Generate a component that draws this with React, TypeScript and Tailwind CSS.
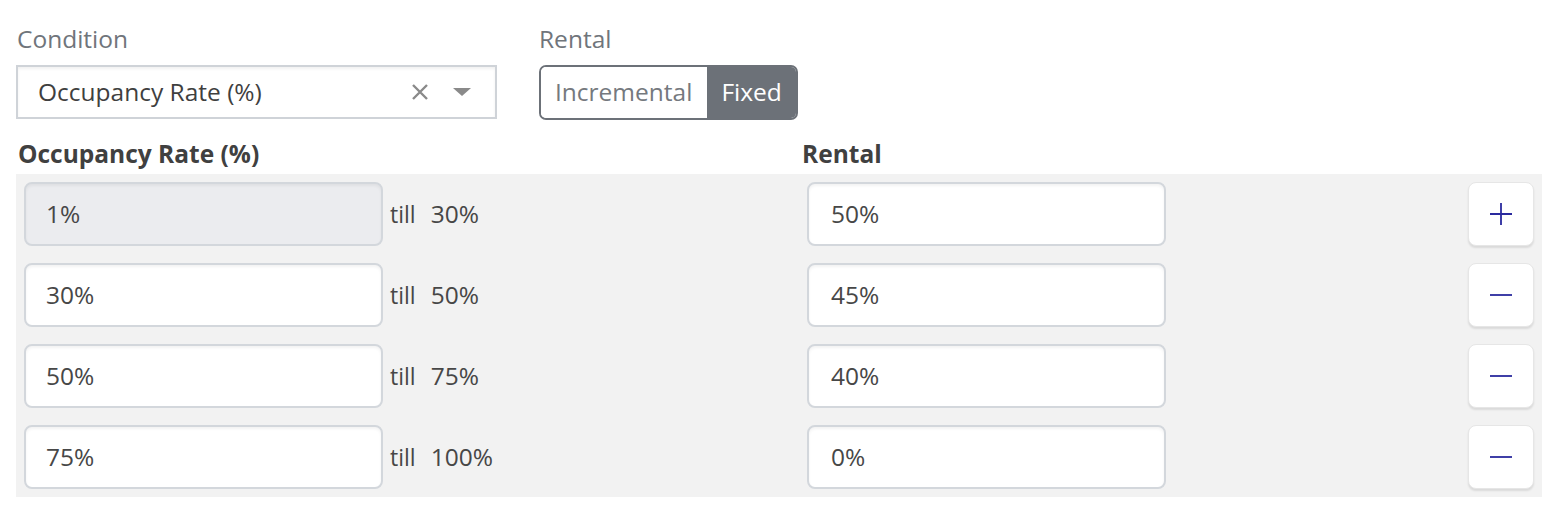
import React from 'react';

const rows = [
  { from: '1%', till: '30%', rental: '50%', disabled: true },
  { from: '30%', till: '50%', rental: '45%' },
  { from: '50%', till: '75%', rental: '40%' },
  { from: '75%', till: '100%', rental: '0%' },
];

function PlusIcon() {
  return (
    <svg width="24" height="24" viewBox="0 0 24 24">
      <path d="M12 1v22M1 12h22" stroke="#2a2a9e" strokeWidth="1.8" />
    </svg>
  );
}

function MinusIcon() {
  return (
    <svg width="24" height="24" viewBox="0 0 24 24">
      <path d="M1 12h22" stroke="#2a2a9e" strokeWidth="1.8" />
    </svg>
  );
}

export default function App() {
  return (
    <div
      className="w-[1552px] h-[520px] bg-white pl-4 pr-[10px] pt-[24px] text-[#4a4a4a]"
      style={{ fontFamily: '"Open Sans", "Noto Sans", sans-serif' }}
    >
      <div className="flex gap-[42px]">
        <div className="flex flex-col w-[481px]">
          <label className="text-[24.5px] leading-[30px] text-[#70757b] px-[1px]">Condition</label>
          <div className="mt-[11px] h-[54px] border-2 border-[#cfd3d8] shadow-[inset_0_2px_3px_rgba(0,0,0,0.06)] flex items-center pl-5 pr-6">
            <span className="flex-1 text-[24.5px] text-[#3f3f3f]">Occupancy Rate (%)</span>
            <svg width="18" height="18" viewBox="0 0 18 18" className="mr-[24px]">
              <path d="M2 2l14 14M16 2L2 16" stroke="#8a8a8a" strokeWidth="2.4" />
            </svg>
            <svg width="18" height="10" viewBox="0 0 18 10">
              <path d="M0 1h18L9 9z" fill="#8a8a8a" />
            </svg>
          </div>
        </div>
        <div className="flex flex-col">
          <label className="text-[24.5px] leading-[30px] text-[#70757b]">Rental</label>
          <div className="mt-[11px] h-[55px] flex border-2 border-[#6c7178] rounded-[7px] overflow-hidden">
            <button className="pl-[14px] pr-[15px] text-[24.5px] text-[#75797e] bg-white">Incremental</button>
            <button className="px-[14px] text-[24.5px] text-white bg-[#6c7178]">Fixed</button>
          </div>
        </div>
      </div>

      <div className="flex mt-[18px] h-[33px] items-center font-bold text-[24.5px] text-[#404040]">
        <div className="w-[786px] pl-[2px]">Occupancy Rate (%)</div>
        <div>Rental</div>
      </div>

      <div className="mt-[3px] w-[1526px] bg-[#f2f2f2] p-2 flex flex-col gap-[17px]">
        {rows.map((r, i) => (
          <div key={i} className="flex items-center h-[64px]">
            <div className="w-[783px] flex items-center">
              <div
                className={
                  'w-[359px] h-[64px] rounded-[8px] border-2 border-[#d3d7dc] flex items-center pl-5 text-[24.5px] text-[#474747] shadow-[inset_0_2px_3px_rgba(0,0,0,0.05)] ' +
                  (r.disabled ? 'bg-[#ebecef]' : 'bg-white')
                }
              >
                {r.from}
              </div>
              <div className="ml-[7px] flex items-baseline text-[#474747]">
                <span className="text-[23px]">till</span>
                <span className="ml-[15px] text-[24.5px]">{r.till}</span>
              </div>
            </div>
            <div className="w-[359px] h-[64px] rounded-[8px] border-2 border-[#d3d7dc] bg-white flex items-center pl-[22px] text-[24.5px] text-[#474747] shadow-[inset_0_2px_3px_rgba(0,0,0,0.05)]">
              {r.rental}
            </div>
            <div className="flex-1" />
            <button className="w-[66px] h-[64px] rounded-[8px] bg-white border border-[#e6e6e6] shadow-[0_2px_2px_rgba(0,0,0,0.1)] flex items-center justify-center">
              {i === 0 ? <PlusIcon /> : <MinusIcon />}
            </button>
          </div>
        ))}
      </div>
    </div>
  );
}
